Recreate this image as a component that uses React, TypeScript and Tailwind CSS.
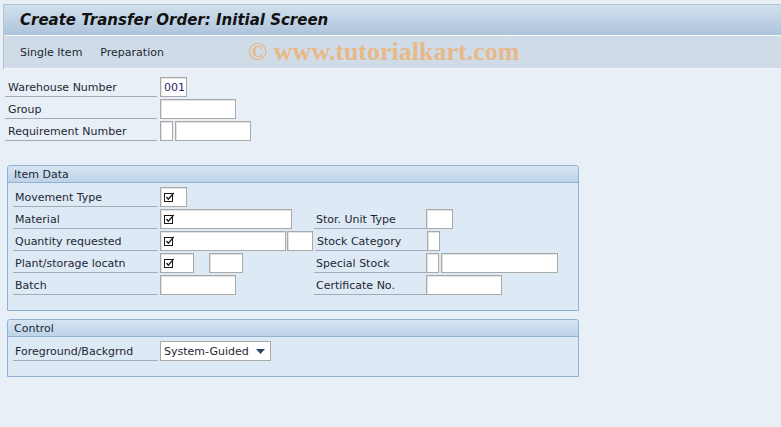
import type { ReactNode } from 'react';

// SAP GUI style "Create Transfer Order" initial screen

function CheckIcon() {
  return (
    <svg width="11" height="11" viewBox="0 0 11 11" className="shrink-0">
      <rect x="0.5" y="1.5" width="8" height="8" fill="none" stroke="#1a1a1a" strokeWidth="1" />
      <path d="M2.5 5 L4.3 7.2 L9.8 0.8" fill="none" stroke="#1a1a1a" strokeWidth="1.3" />
    </svg>
  );
}

function Field({ className, children }: { className: string; children?: ReactNode }) {
  return (
    <div
      className={`h-[20px] shrink-0 bg-white border border-[#a9a9a9] shadow-[inset_1px_1px_0_#e2e2e2] flex items-center pl-[3px] ${className}`}
    >
      {children}
    </div>
  );
}

function Label({ className, children }: { className: string; children: ReactNode }) {
  return (
    <div className={`h-[20px] shrink-0 border-b border-[#a3acb6] flex items-center pt-[2px] ${className}`}>
      <span className="leading-none">{children}</span>
    </div>
  );
}

function GroupBox({ title, className, children }: { title: string; className: string; children: ReactNode }) {
  return (
    <div className={`w-[572px] ml-[7px] border border-[#8fb1d6] rounded-t-[3px] bg-[#dde9f4] ${className}`}>
      <div className="h-[17px] bg-gradient-to-b from-[#d7e5f2] to-[#bdd3e9] border-b border-[#8fb1d6] flex items-center pl-[6px] rounded-t-[3px]">
        <span className="leading-none">{title}</span>
      </div>
      {children}
    </div>
  );
}

export default function App() {
  return (
    <div className="w-[781px] h-[427px] overflow-hidden bg-[#e8eff7] text-[11px] text-[#1d2733] font-['DejaVu_Sans',sans-serif] pt-[4px]">
      {/* header */}
      <div className="ml-[3px] border-l border-t border-[#b4c2d2]">
        <div className="h-[30px] bg-gradient-to-b from-[#d2e0ed] to-[#adc4dc] flex items-center pl-[16px]">
          <h1 className="font-bold italic text-[15px] text-[#111] leading-none">
            Create Transfer Order: Initial Screen
          </h1>
        </div>
        <div className="h-[34px] bg-[#cfdce8] border-t border-[#f4f8fb] border-b border-[#a5b5c8] flex items-center pl-[16px] pt-[3px]">
          <span>Single Item</span>
          <span className="ml-[18px]">Preparation</span>
          <span className="ml-[84px] -mt-[3px] font-['Liberation_Serif',serif] font-bold text-[26px] text-[#e7b888] leading-none">
            © www.tutorialkart.com
          </span>
        </div>
      </div>

      {/* top fields */}
      <div className="mt-[8px] pl-[5px] flex flex-col gap-[2px]">
        <div className="flex gap-[3px]">
          <Label className="w-[152px] pl-[3px]">Warehouse Number</Label>
          <Field className="w-[27px]">
            <span className="text-[#2b1f6e] leading-none">001</span>
          </Field>
        </div>
        <div className="flex gap-[3px]">
          <Label className="w-[152px] pl-[3px]">Group</Label>
          <Field className="w-[76px]" />
        </div>
        <div className="flex gap-[3px]">
          <Label className="w-[152px] pl-[3px]">Requirement Number</Label>
          <Field className="w-[13px]" />
          <Field className="w-[76px] -ml-[1px]" />
        </div>
      </div>

      {/* item data */}
      <GroupBox title="Item Data" className="mt-[24px]">
        <div className="pt-[4px] pb-[15px] pl-[5px] flex flex-col gap-[2px]">
          <div className="flex">
            <Label className="w-[145px] pl-[2px]">Movement Type</Label>
            <Field className="w-[27px] ml-[2px]">
              <CheckIcon />
            </Field>
          </div>
          <div className="flex">
            <Label className="w-[145px] pl-[2px]">Material</Label>
            <Field className="w-[132px] ml-[2px]">
              <CheckIcon />
            </Field>
            <Label className="w-[112px] pl-[2px] ml-[22px]">Stor. Unit Type</Label>
            <Field className="w-[27px]" />
          </div>
          <div className="flex">
            <Label className="w-[145px] pl-[2px]">Quantity requested</Label>
            <Field className="w-[126px] ml-[2px]">
              <CheckIcon />
            </Field>
            <Field className="w-[26px] ml-[1px]" />
            <Label className="w-[112px] pl-[2px] ml-[2px]">Stock Category</Label>
            <Field className="w-[13px]" />
          </div>
          <div className="flex">
            <Label className="w-[145px] pl-[2px]">Plant/storage locatn</Label>
            <Field className="w-[34px] ml-[2px]">
              <CheckIcon />
            </Field>
            <Field className="w-[34px] ml-[15px]" />
            <Label className="w-[112px] pl-[2px] ml-[71px]">Special Stock</Label>
            <Field className="w-[13px]" />
            <Field className="w-[117px] ml-[2px]" />
          </div>
          <div className="flex">
            <Label className="w-[145px] pl-[2px]">Batch</Label>
            <Field className="w-[76px] ml-[2px]" />
            <Label className="w-[112px] pl-[2px] ml-[78px]">Certificate No.</Label>
            <Field className="w-[76px]" />
          </div>
        </div>
      </GroupBox>

      {/* control */}
      <GroupBox title="Control" className="mt-[8px]">
        <div className="pt-[4px] pb-[15px] pl-[5px] flex">
          <Label className="w-[145px] pl-[2px]">Foreground/Backgrnd</Label>
          <div className="h-[20px] w-[111px] ml-[2px] bg-white border border-[#a9a9a9] flex items-center justify-between pl-[3px] pr-[5px]">
            <span className="leading-none">System-Guided</span>
            <svg width="9" height="5" viewBox="0 0 9 5">
              <path d="M0 0 H9 L4.5 5 Z" fill="#2d4267" />
            </svg>
          </div>
        </div>
      </GroupBox>
    </div>
  );
}
